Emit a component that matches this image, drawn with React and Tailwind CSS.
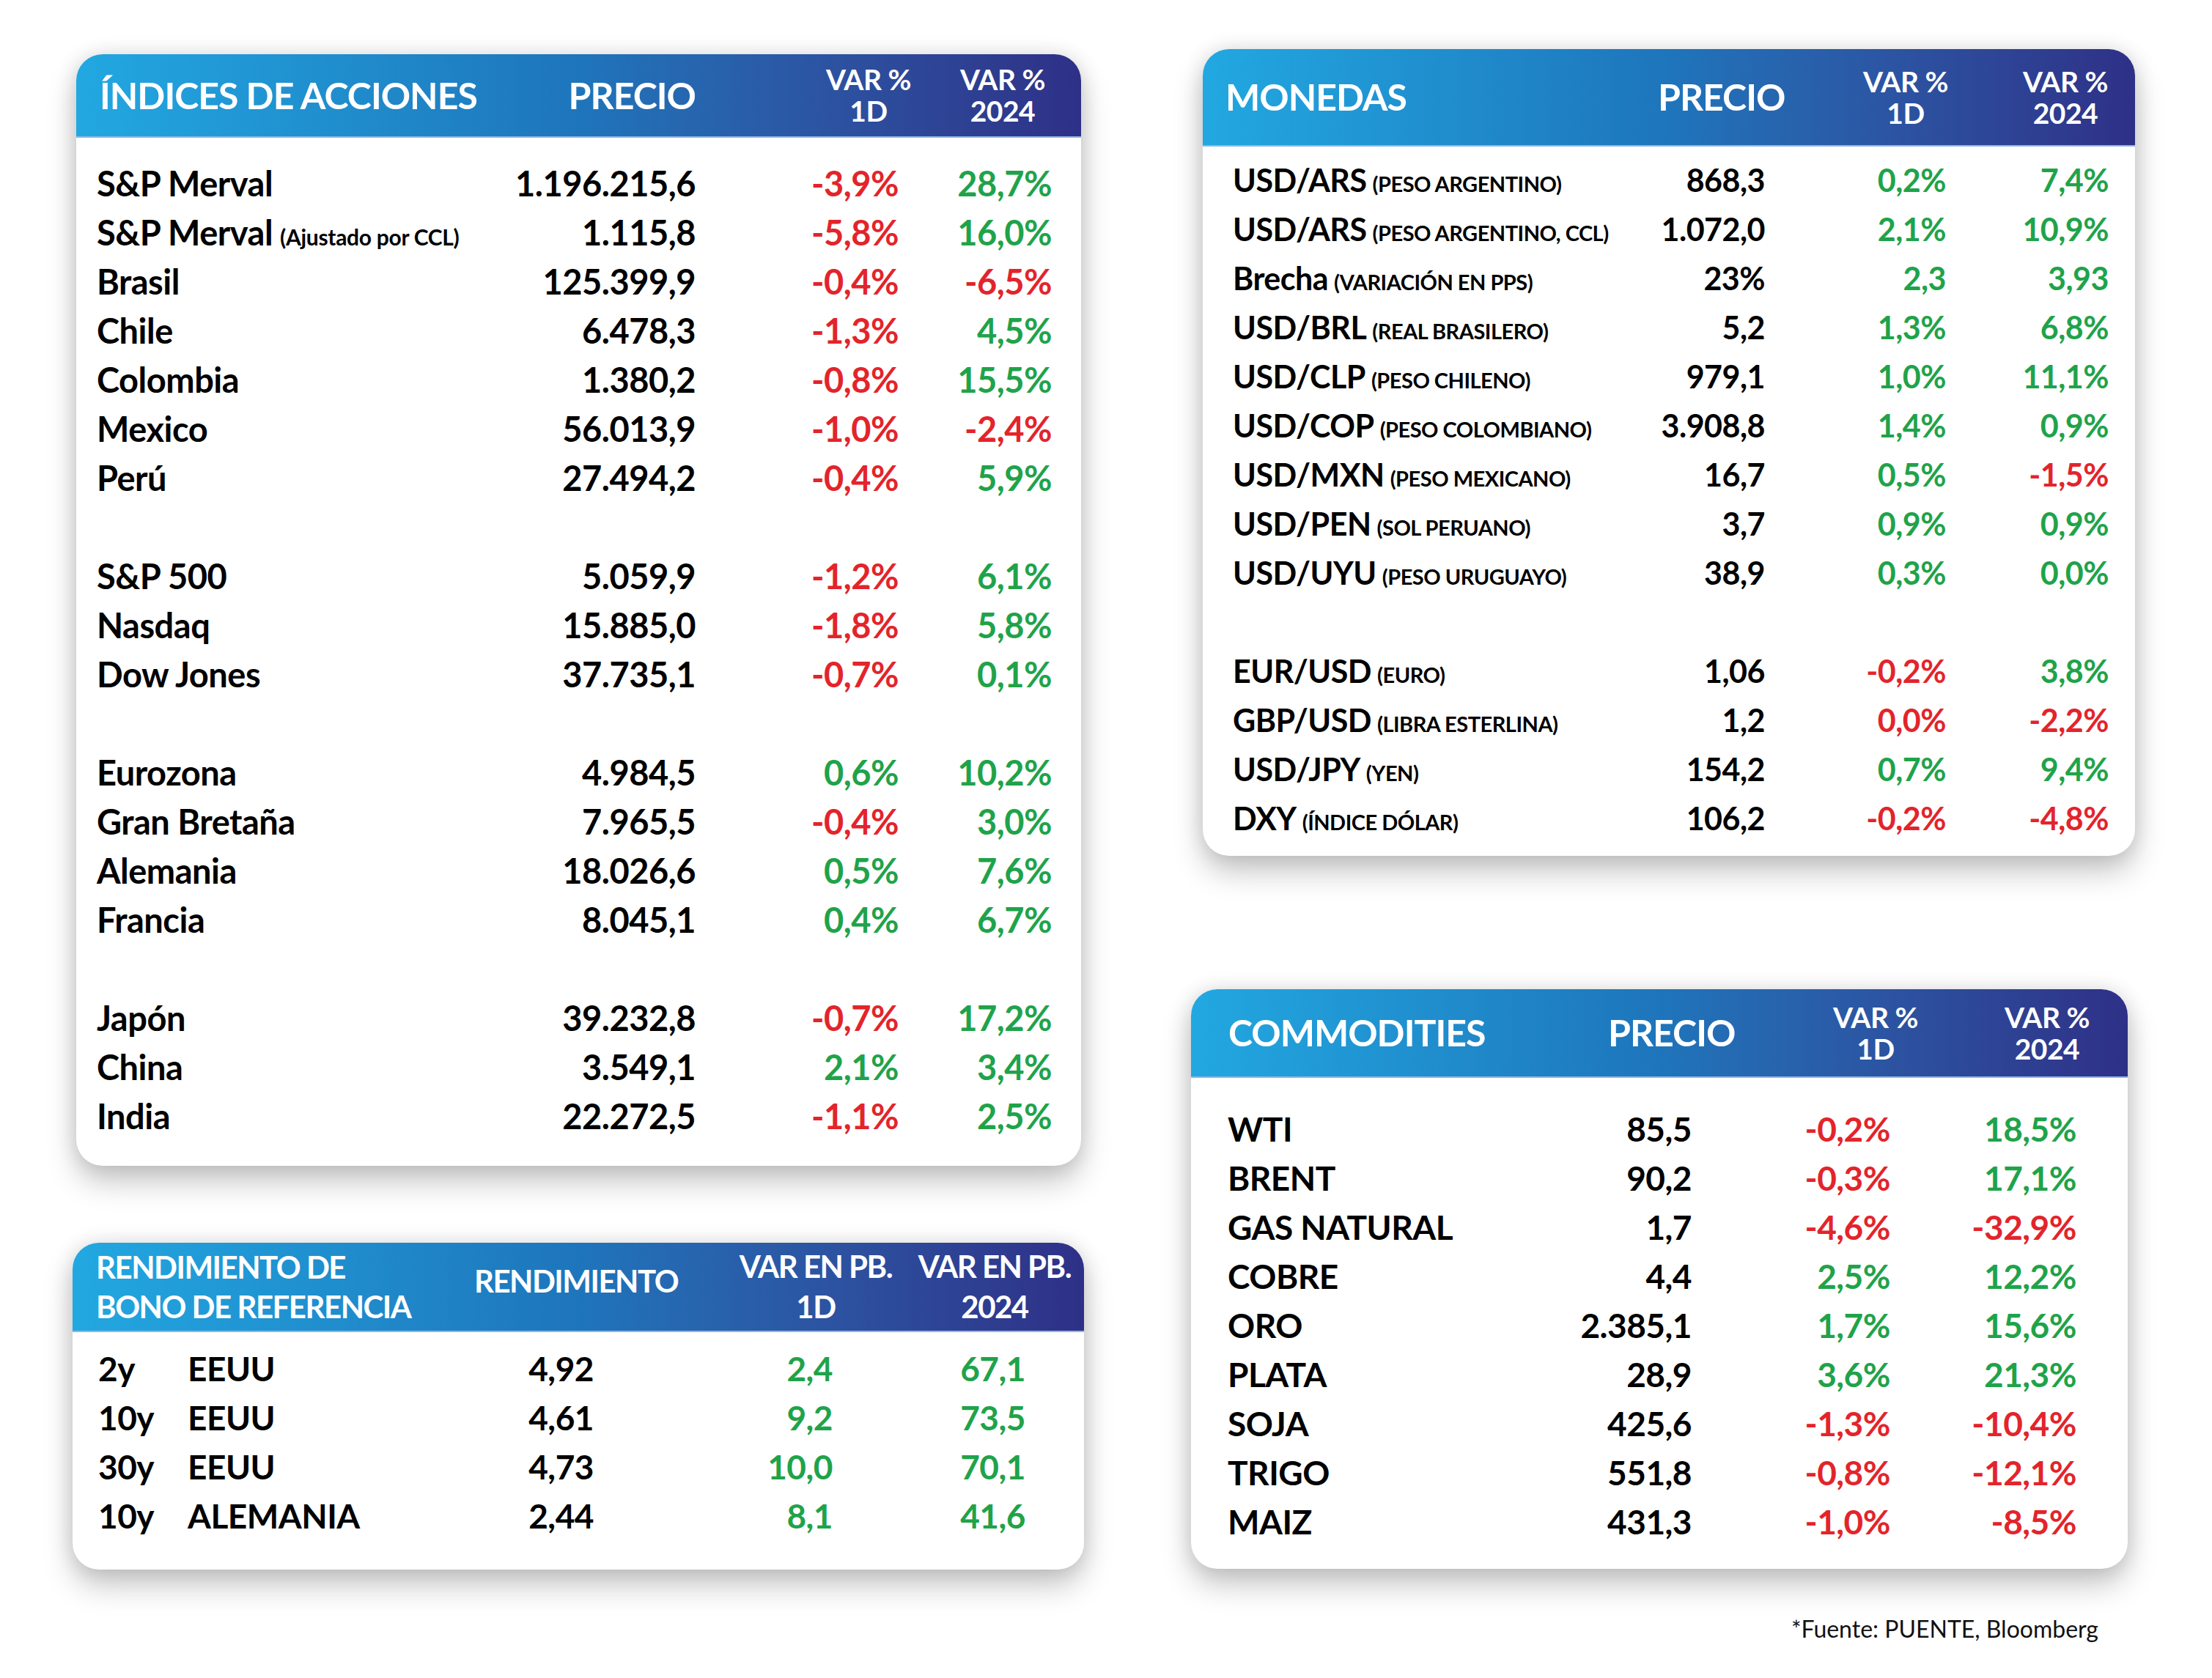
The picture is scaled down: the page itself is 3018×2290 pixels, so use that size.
const R = "text-[#e3242b]";
const G = "text-[#1fa34a]";

const indices = [
  ["S&P Merval", "", "1.196.215,6", "-3,9%", R, "28,7%", G],
  ["S&P Merval", "(Ajustado por CCL)", "1.115,8", "-5,8%", R, "16,0%", G],
  ["Brasil", "", "125.399,9", "-0,4%", R, "-6,5%", R],
  ["Chile", "", "6.478,3", "-1,3%", R, "4,5%", G],
  ["Colombia", "", "1.380,2", "-0,8%", R, "15,5%", G],
  ["Mexico", "", "56.013,9", "-1,0%", R, "-2,4%", R],
  ["Perú", "", "27.494,2", "-0,4%", R, "5,9%", G],
  null,
  ["S&P 500", "", "5.059,9", "-1,2%", R, "6,1%", G],
  ["Nasdaq", "", "15.885,0", "-1,8%", R, "5,8%", G],
  ["Dow Jones", "", "37.735,1", "-0,7%", R, "0,1%", G],
  null,
  ["Eurozona", "", "4.984,5", "0,6%", G, "10,2%", G],
  ["Gran Bretaña", "", "7.965,5", "-0,4%", R, "3,0%", G],
  ["Alemania", "", "18.026,6", "0,5%", G, "7,6%", G],
  ["Francia", "", "8.045,1", "0,4%", G, "6,7%", G],
  null,
  ["Japón", "", "39.232,8", "-0,7%", R, "17,2%", G],
  ["China", "", "3.549,1", "2,1%", G, "3,4%", G],
  ["India", "", "22.272,5", "-1,1%", R, "2,5%", G],
];

const monedas = [
  ["USD/ARS", "(PESO ARGENTINO)", "868,3", "0,2%", G, "7,4%", G],
  ["USD/ARS", "(PESO ARGENTINO, CCL)", "1.072,0", "2,1%", G, "10,9%", G],
  ["Brecha", "(VARIACIÓN EN PPS)", "23%", "2,3", G, "3,93", G],
  ["USD/BRL", "(REAL BRASILERO)", "5,2", "1,3%", G, "6,8%", G],
  ["USD/CLP", "(PESO CHILENO)", "979,1", "1,0%", G, "11,1%", G],
  ["USD/COP", "(PESO COLOMBIANO)", "3.908,8", "1,4%", G, "0,9%", G],
  ["USD/MXN", "(PESO MEXICANO)", "16,7", "0,5%", G, "-1,5%", R],
  ["USD/PEN", "(SOL PERUANO)", "3,7", "0,9%", G, "0,9%", G],
  ["USD/UYU", "(PESO URUGUAYO)", "38,9", "0,3%", G, "0,0%", G],
  null,
  ["EUR/USD", "(EURO)", "1,06", "-0,2%", R, "3,8%", G],
  ["GBP/USD", "(LIBRA ESTERLINA)", "1,2", "0,0%", R, "-2,2%", R],
  ["USD/JPY", "(YEN)", "154,2", "0,7%", G, "9,4%", G],
  ["DXY", "(ÍNDICE DÓLAR)", "106,2", "-0,2%", R, "-4,8%", R],
];

const bonos = [
  ["2y", "EEUU", "4,92", "2,4", "67,1"],
  ["10y", "EEUU", "4,61", "9,2", "73,5"],
  ["30y", "EEUU", "4,73", "10,0", "70,1"],
  ["10y", "ALEMANIA", "2,44", "8,1", "41,6"],
];

const commodities = [
  ["WTI", "85,5", "-0,2%", R, "18,5%", G],
  ["BRENT", "90,2", "-0,3%", R, "17,1%", G],
  ["GAS NATURAL", "1,7", "-4,6%", R, "-32,9%", R],
  ["COBRE", "4,4", "2,5%", G, "12,2%", G],
  ["ORO", "2.385,1", "1,7%", G, "15,6%", G],
  ["PLATA", "28,9", "3,6%", G, "21,3%", G],
  ["SOJA", "425,6", "-1,3%", R, "-10,4%", R],
  ["TRIGO", "551,8", "-0,8%", R, "-12,1%", R],
  ["MAIZ", "431,3", "-1,0%", R, "-8,5%", R],
];

const card =
  "bg-white rounded-[36px] overflow-hidden shadow-[0_22px_40px_rgba(0,0,0,0.22),0_0_28px_rgba(0,0,0,0.12)]";
const head =
  "flex items-center text-white font-bold bg-linear-to-r from-[#22a8e1] via-[#1e75bb] via-50% to-[#2e3087] border-b-2 border-[#8fb6e3]";
const row = "flex h-[67px] leading-[67px] font-bold whitespace-nowrap tracking-[-0.5px]";

function VarHead({ top, bottom, className }) {
  return (
    <div className={"text-center text-[39px] leading-[43px] tracking-[-0.5px] whitespace-nowrap " + className}>
      <div>{top}</div>
      <div>{bottom}</div>
    </div>
  );
}

export default function App() {
  return (
    <div className="w-[3018px] h-[2290px] bg-white flex font-['Lato','Noto_Sans',sans-serif] text-black">
      {/* left column */}
      <div className="pl-[99px] flex flex-col">
        <div className={card + " mt-[74px] ml-[5px] w-[1371px] h-[1517px]"}>
          <div className={head + " h-[114px] pl-[32px] text-[50px] tracking-[-1px]"}>
            <div className="w-[638px] whitespace-nowrap">ÍNDICES DE ACCIONES</div>
            <div className="w-[175px] text-right">PRECIO</div>
            <VarHead top="VAR %" bottom="1D" className="ml-[166px] w-[140px]" />
            <VarHead top="VAR %" bottom="2024" className="ml-[43px] w-[140px]" />
          </div>
          <div className="pl-[28px] pt-[29px]">
            {indices.map((r, i) =>
              r ? (
                <div key={i} className={row + " text-[47px]"}>
                  <div className="w-[568px]">
                    {r[0]}
                    {r[1] && <span className="ml-[10px] text-[30px] tracking-[-0.3px]">{r[1]}</span>}
                  </div>
                  <div className="w-[249px] text-right">{r[2]}</div>
                  <div className={"w-[277px] text-right " + r[4]}>{r[3]}</div>
                  <div className={"w-[209px] text-right " + r[6]}>{r[5]}</div>
                </div>
              ) : (
                <div key={i} className="h-[67px]" />
              )
            )}
          </div>
        </div>

        <div className={card + " mt-[105px] w-[1380px] h-[446px]"}>
          <div className={head + " h-[122px] pl-[32px] text-[42px] tracking-[-1.5px]"}>
            <div className="w-[470px] leading-[54px] whitespace-nowrap">
              <div>RENDIMIENTO DE</div>
              <div>BONO DE REFERENCIA</div>
            </div>
            <div className="w-[370px] text-center mb-[16px]">RENDIMIENTO</div>
            <div className="ml-[27px] w-[230px] text-center leading-[55px] whitespace-nowrap">
              <div>VAR EN PB.</div>
              <div>1D</div>
            </div>
            <div className="ml-[14px] w-[230px] text-center leading-[55px] whitespace-nowrap">
              <div>VAR EN PB.</div>
              <div>2024</div>
            </div>
          </div>
          <div className="pl-[35px] pt-[16px]">
            {bonos.map((r, i) => (
              <div key={i} className={row + " text-[46px]"}>
                <div className="w-[122px]">{r[0]}</div>
                <div className="w-[324px]">{r[1]}</div>
                <div className="w-[230px] text-right">{r[2]}</div>
                <div className={"w-[326px] text-right " + G}>{r[3]}</div>
                <div className={"w-[263px] text-right " + G}>{r[4]}</div>
              </div>
            ))}
          </div>
        </div>
      </div>

      {/* right column */}
      <div className="ml-[146px] flex flex-col">
        <div className={card + " mt-[67px] ml-[16px] w-[1272px] h-[1101px]"}>
          <div className={head + " h-[133px] pl-[31px] text-[50px] tracking-[-1px]"}>
            <div className="w-[590px]">MONEDAS</div>
            <div className="w-[171px] text-right">PRECIO</div>
            <VarHead top="VAR %" bottom="1D" className="ml-[97px] w-[140px]" />
            <VarHead top="VAR %" bottom="2024" className="ml-[78px] w-[140px]" />
          </div>
          <div className="pl-[41px] pt-[12px]">
            {monedas.map((r, i) =>
              r ? (
                <div key={i} className={row + " text-[43px]"}>
                  <div className="w-[568px]">
                    {r[0]}
                    <span className="ml-[8px] text-[29px] tracking-[-0.5px]">{r[1]}</span>
                  </div>
                  <div className="w-[158px] text-right">{r[2]}</div>
                  <div className={"w-[247px] text-right " + r[4]}>{r[3]}</div>
                  <div className={"w-[222px] text-right " + r[6]}>{r[5]}</div>
                </div>
              ) : (
                <div key={i} className="h-[67px]" />
              )
            )}
          </div>
        </div>

        <div className={card + " mt-[182px] w-[1278px] h-[791px]"}>
          <div className={head + " h-[121px] pl-[51px] text-[50px] tracking-[-1px]"}>
            <div className="w-[518px]">COMMODITIES</div>
            <div className="w-[167px] text-right">PRECIO</div>
            <VarHead top="VAR %" bottom="1D" className="ml-[128px] w-[140px]" />
            <VarHead top="VAR %" bottom="2024" className="ml-[94px] w-[140px]" />
          </div>
          <div className="pl-[50px] pt-[36px]">
            {commodities.map((r, i) => (
              <div key={i} className={row + " text-[46px]"}>
                <div className="w-[453px]">{r[0]}</div>
                <div className="w-[180px] text-right">{r[1]}</div>
                <div className={"w-[271px] text-right " + r[3]}>{r[2]}</div>
                <div className={"w-[254px] text-right " + r[5]}>{r[4]}</div>
              </div>
            ))}
          </div>
        </div>

        <div className="mt-[62px] w-[1238px] text-right text-[32px] leading-[40px] text-[#111]">
          *Fuente: PUENTE, Bloomberg
        </div>
      </div>
    </div>
  );
}
